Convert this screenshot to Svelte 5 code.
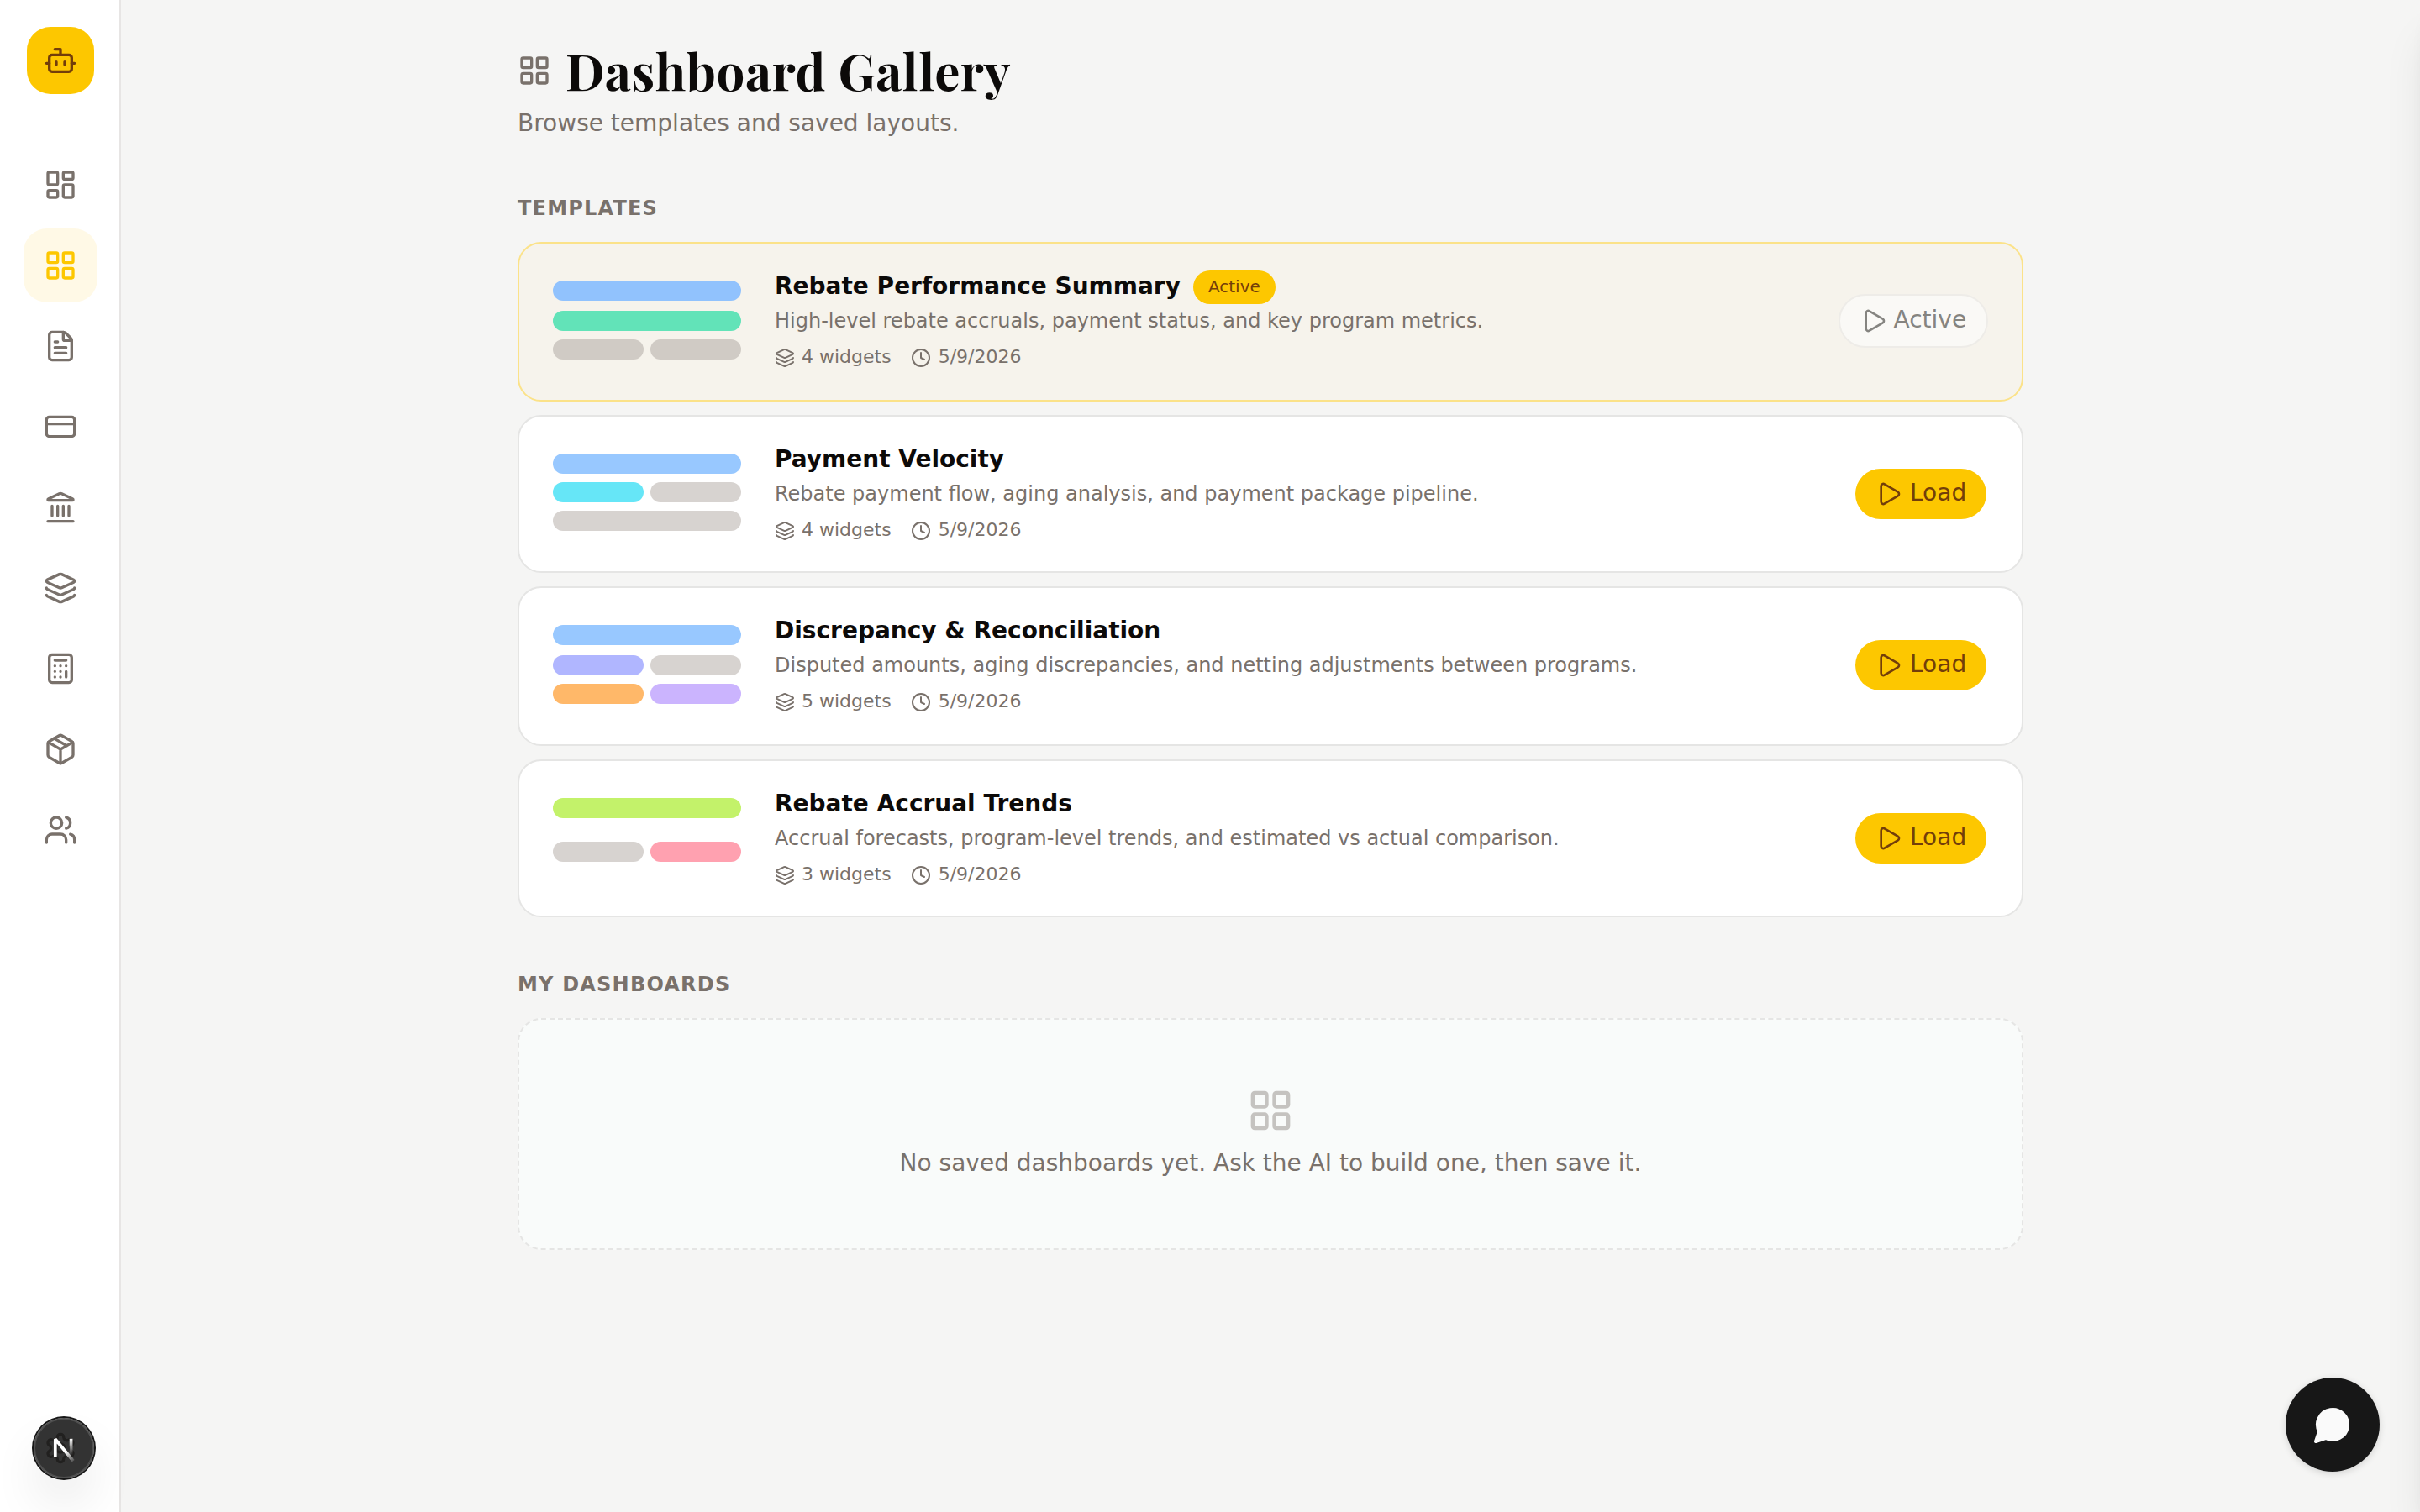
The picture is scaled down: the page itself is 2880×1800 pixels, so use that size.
<script lang="ts">
    type Bar = { color: string; wide?: boolean };

    const nav = [
        { icon: "dashboard" },
        { icon: "grid", active: true },
        { icon: "file" },
        { icon: "card" },
        { icon: "bank" },
        { icon: "layers" },
        { icon: "calculator" },
        { icon: "package" },
        { icon: "users" },
    ];

    const templates: {
        name: string; text: string; widgets: number; date: string;
        height: number; rows: string; bars: Bar[]; active?: boolean;
    }[] = [
        {
            name: "Rebate Performance Summary",
            text: "High-level rebate accruals, payment status, and key program metrics.",
            widgets: 4,
            date: "5/9/2026",
            height: 190,
            rows: "28px 26px 26px",
            bars: [
                { color: "#91c2fd", wide: true },
                { color: "#62e3b8", wide: true },
                { color: "#d0cbc5" },
                { color: "#d0cbc5" },
            ],
            active: true,
        },
        {
            name: "Payment Velocity",
            text: "Rebate payment flow, aging analysis, and payment package pipeline.",
            widgets: 4,
            date: "5/9/2026",
            height: 188,
            rows: "26px 26px 28px",
            bars: [
                { color: "#98c8ff", wide: true },
                { color: "#66e6f7" },
                { color: "#d7d3d0" },
                { color: "#d7d3d0", wide: true },
            ],
        },
        {
            name: "Discrepancy & Reconciliation",
            text: "Disputed amounts, aging discrepancies, and netting adjustments between programs.",
            widgets: 5,
            date: "5/9/2026",
            height: 190,
            rows: "28px 26px 26px",
            bars: [
                { color: "#98c8ff", wide: true },
                { color: "#b0b6ff" },
                { color: "#d7d3d0" },
                { color: "#ffb869" },
                { color: "#cbb4fe" },
            ],
        },
        {
            name: "Rebate Accrual Trends",
            text: "Accrual forecasts, program-level trends, and estimated vs actual comparison.",
            widgets: 3,
            date: "5/9/2026",
            height: 188,
            rows: "44px 44px",
            bars: [
                { color: "#c3f26a", wide: true },
                { color: "#d7d3d0" },
                { color: "#ffa1b0" },
            ],
        },
    ];
</script>

{#snippet icon(name: string, size: number)}
    <svg class="icon" width={size} height={size} viewBox="0 0 24 24">
        {#if name === "bot"}
            <path d="M12 8V4H8" />
            <rect width="16" height="12" x="4" y="8" rx="2" />
            <path d="M2 14h2M20 14h2M15 13v2M9 13v2" />
        {:else if name === "dashboard"}
            <rect width="7" height="9" x="3" y="3" rx="1" />
            <rect width="7" height="5" x="14" y="3" rx="1" />
            <rect width="7" height="9" x="14" y="12" rx="1" />
            <rect width="7" height="5" x="3" y="16" rx="1" />
        {:else if name === "grid"}
            <rect width="7" height="7" x="3" y="3" rx="1" />
            <rect width="7" height="7" x="14" y="3" rx="1" />
            <rect width="7" height="7" x="14" y="14" rx="1" />
            <rect width="7" height="7" x="3" y="14" rx="1" />
        {:else if name === "file"}
            <path d="M6 22a2 2 0 0 1-2-2V4a2 2 0 0 1 2-2h8a2.4 2.4 0 0 1 1.704.706l3.588 3.588A2.4 2.4 0 0 1 20 8v12a2 2 0 0 1-2 2z" />
            <path d="M14 2v5a1 1 0 0 0 1 1h5M10 9H8M16 13H8M16 17H8" />
        {:else if name === "card"}
            <rect width="20" height="14" x="2" y="5" rx="2" />
            <path d="M2 10h20" />
        {:else if name === "bank"}
            <path d="M10 18v-7M14 18v-7M18 18v-7M6 18v-7M3 22h18" />
            <path d="M11.12 2.198a2 2 0 0 1 1.76.006l7.866 3.847c.476.233.31.949-.22.949H3.474c-.53 0-.695-.716-.22-.949z" />
        {:else if name === "layers"}
            <path d="M12.83 2.18a2 2 0 0 0-1.66 0L2.6 6.08a1 1 0 0 0 0 1.83l8.58 3.91a2 2 0 0 0 1.66 0l8.58-3.9a1 1 0 0 0 0-1.83z" />
            <path d="M2 12a1 1 0 0 0 .58.91l8.6 3.91a2 2 0 0 0 1.65 0l8.58-3.9A1 1 0 0 0 22 12" />
            <path d="M2 17a1 1 0 0 0 .58.91l8.6 3.91a2 2 0 0 0 1.65 0l8.58-3.9A1 1 0 0 0 22 17" />
        {:else if name === "calculator"}
            <rect width="16" height="20" x="4" y="2" rx="2" />
            <path d="M8 6h8M16 14v4M16 10h.01M12 10h.01M8 10h.01M12 14h.01M8 14h.01M12 18h.01M8 18h.01" />
        {:else if name === "package"}
            <path d="M11 21.73a2 2 0 0 0 2 0l7-4A2 2 0 0 0 21 16V8a2 2 0 0 0-1-1.73l-7-4a2 2 0 0 0-2 0l-7 4A2 2 0 0 0 3 8v8a2 2 0 0 0 1 1.73z" />
            <path d="M12 22V12M3.29 7 12 12l8.71-5M7.5 4.27l9 5.15" />
        {:else if name === "users"}
            <path d="M16 21v-2a4 4 0 0 0-4-4H6a4 4 0 0 0-4 4v2" />
            <path d="M16 3.128a4 4 0 0 1 0 7.744M22 21v-2a4 4 0 0 0-3-3.87" />
            <circle cx="9" cy="7" r="4" />
        {:else if name === "settings"}
            <path d="M12.22 2h-.44a2 2 0 0 0-2 2v.18a2 2 0 0 1-1 1.73l-.43.25a2 2 0 0 1-2 0l-.15-.08a2 2 0 0 0-2.73.73l-.22.38a2 2 0 0 0 .73 2.73l.15.1a2 2 0 0 1 1 1.72v.51a2 2 0 0 1-1 1.74l-.15.09a2 2 0 0 0-.73 2.73l.22.38a2 2 0 0 0 2.73.73l.15-.08a2 2 0 0 1 2 0l.43.25a2 2 0 0 1 1 1.73V20a2 2 0 0 0 2 2h.44a2 2 0 0 0 2-2v-.18a2 2 0 0 1 1-1.73l.43-.25a2 2 0 0 1 2 0l.15.08a2 2 0 0 0 2.73-.73l.22-.39a2 2 0 0 0-.73-2.73l-.15-.08a2 2 0 0 1-1-1.74v-.5a2 2 0 0 1 1-1.74l.15-.09a2 2 0 0 0 .73-2.73l-.22-.38a2 2 0 0 0-2.73-.73l-.15.08a2 2 0 0 1-2 0l-.43-.25a2 2 0 0 1-1-1.73V4a2 2 0 0 0-2-2z" />
            <circle cx="12" cy="12" r="3" />
        {:else if name === "clock"}
            <circle cx="12" cy="12" r="10" />
            <path d="M12 6v6l4 2" />
        {:else if name === "play"}
            <path d="M5 5a2 2 0 0 1 3.008-1.728l11.997 6.998a2 2 0 0 1 .003 3.458l-12 7A2 2 0 0 1 5 19z" />
        {:else if name === "chat"}
            <path fill="currentColor" d="M7.9 20A9 9 0 1 0 4 16.1L2 22Z" />
        {/if}
    </svg>
{/snippet}

<div class="app">
    <aside class="sidebar">
        <div class="logo">{@render icon("bot", 40)}</div>
        <nav>
            {#each nav as item}
                <button class="nav-item" class:active={item.active} aria-label={item.icon}>
                    {@render icon(item.icon, 40)}
                </button>
            {/each}
        </nav>
        <button class="nav-item settings" aria-label="settings">{@render icon("settings", 40)}</button>
    </aside>

    <main>
        <header>
            <span class="title-icon">{@render icon("grid", 40)}</span>
            <h1>Dashboard Gallery</h1>
        </header>
        <p class="subtitle">Browse templates and saved layouts.</p>

        <h2>Templates</h2>
        <div class="list">
            {#each templates as t}
                <article class="card" class:current={t.active} style:height="{t.height}px">
                    <div class="preview" style:grid-template-rows={t.rows}>
                        {#each t.bars as bar}
                            <span class="bar" class:wide={bar.wide} style:background={bar.color}></span>
                        {/each}
                    </div>
                    <div class="info">
                        <div class="name">
                            <h3>{t.name}</h3>
                            {#if t.active}<span class="badge">Active</span>{/if}
                        </div>
                        <p class="text">{t.text}</p>
                        <div class="meta">
                            <span class="meta-item">{@render icon("layers", 24)}<span>{t.widgets} widgets</span></span>
                            <span class="meta-item date">{@render icon("clock", 24)}<span>{t.date}</span></span>
                        </div>
                    </div>
                    <button class="action" disabled={t.active}>
                        {@render icon("play", 32)}<span>{t.active ? "Active" : "Load"}</span>
                    </button>
                </article>
            {/each}
        </div>

        <h2 class="mine">My Dashboards</h2>
        <div class="empty">
            <span class="empty-icon">{@render icon("grid", 56)}</span>
            <p>No saved dashboards yet. Ask the AI to build one, then save it.</p>
        </div>
    </main>

    <!-- closed drawer, only its shadow reaches the page -->
    <div class="drawer"></div>

    <div class="dev-badge">
        <svg width="72" height="72" viewBox="0 0 36 36">
            <defs>
                <linearGradient id="n-diag" x1="16.5" y1="18" x2="24" y2="27" gradientUnits="userSpaceOnUse">
                    <stop offset="0.3" stop-color="#fff" />
                    <stop offset="1" stop-color="#fff" stop-opacity="0" />
                </linearGradient>
                <linearGradient id="n-stem" x1="0" y1="12.4" x2="0" y2="22" gradientUnits="userSpaceOnUse">
                    <stop stop-color="#fff" />
                    <stop offset="1" stop-color="#fff" stop-opacity="0" />
                </linearGradient>
            </defs>
            <path d="M23.6 25.6 12.9 12.6V23.4" fill="none" stroke="url(#n-diag)" stroke-width="1.86" stroke-linejoin="bevel" />
            <path d="M22.3 12.4V23.4" fill="none" stroke="url(#n-stem)" stroke-width="1.86" />
        </svg>
    </div>

    <button class="chat" aria-label="chat">{@render icon("chat", 48)}</button>
</div>

<style>
    :global(body) {
        margin: 0;
        background: #f5f5f4;
    }

    .app {
        position: relative;
        display: flex;
        width: 2880px;
        height: 1800px;
        overflow: hidden;
        background: #f5f5f4;
        color: #0c0a09;
        font-family: "DejaVu Sans", sans-serif;
    }

    h1, h2, h3, p {
        margin: 0;
    }

    button {
        font: inherit;
        border: none;
        padding: 0;
    }

    .icon {
        display: block;
        flex-shrink: 0;
        fill: none;
        stroke: currentColor;
        stroke-width: 2;
        stroke-linecap: round;
        stroke-linejoin: round;
    }

    .sidebar {
        box-sizing: border-box;
        width: 144px;
        flex-shrink: 0;
        display: flex;
        flex-direction: column;
        padding: 32px 26px 32px 28px;
        background: #fff;
        border-right: 2px solid #e7e5e4;
    }

    .logo {
        display: grid;
        place-items: center;
        width: 80px;
        height: 80px;
        margin: 0 4px 64px;
        border-radius: 28px;
        background: #fdc700;
        color: #733e0a;
    }

    nav {
        display: flex;
        flex-direction: column;
        gap: 8px;
    }

    .nav-item {
        display: grid;
        place-items: center;
        width: 88px;
        height: 88px;
        border-radius: 28px;
        background: none;
        color: #79716b;
    }

    .nav-item.active {
        background: #fff9e6;
        color: #fdc700;
    }

    .nav-item.settings {
        margin-top: auto;
        color: #a6a09b;
    }

    main {
        width: 1792px;
        margin: 0 auto;
        padding-top: 48px;
    }

    header {
        display: flex;
        align-items: center;
        gap: 17px;
        height: 72px;
    }

    .title-icon {
        color: #79716b;
    }

    h1 {
        margin-bottom: 2px;
        font-family: "Playfair Display", "Liberation Serif", serif;
        font-size: 60px;
        line-height: 72px;
        font-weight: 700;
        letter-spacing: 0.01em;
    }

    .subtitle {
        margin-top: 10px;
        font-size: 28px;
        line-height: 33px;
        color: #79716b;
    }

    h2 {
        margin: 71px 0 26px;
        font-size: 24px;
        line-height: 28px;
        font-weight: 700;
        letter-spacing: 1.2px;
        text-transform: uppercase;
        color: #79716b;
    }

    h2.mine {
        margin-top: 66px;
    }

    .list {
        display: flex;
        flex-direction: column;
        gap: 16px;
    }

    .card {
        box-sizing: border-box;
        display: flex;
        align-items: flex-start;
        gap: 40px;
        padding: 32px 40px;
        border: 2px solid #e5e5e4;
        border-radius: 28px;
        background: #fff;
    }

    .card.current {
        background: #f6f3ec;
        border-color: #fbe289;
    }

    .preview {
        display: grid;
        grid-template-columns: 1fr 1fr;
        gap: 8px;
        width: 224px;
        height: 96px;
        margin-top: 12px;
    }

    .bar {
        height: 24px;
        border-radius: 12px;
    }

    .bar.wide {
        grid-column: span 2;
    }

    .info {
        flex: 1;
    }

    .name {
        display: flex;
        align-items: center;
        gap: 15px;
        height: 40px;
    }

    h3 {
        font-size: 28px;
        line-height: 33px;
        font-weight: 700;
        margin-bottom: 3px;
    }

    .badge {
        height: 40px;
        padding: 0 18px;
        border-radius: 20px;
        background: #fdc700;
        color: #733e0a;
        font-size: 20px;
        line-height: 38px;
    }

    .text {
        margin-top: 6px;
        font-size: 24px;
        line-height: 28px;
        color: #79716b;
    }

    .meta {
        display: flex;
        gap: 23px;
        margin-top: 16px;
        font-size: 22px;
        line-height: 25px;
        color: #79716b;
    }

    .meta-item {
        display: flex;
        gap: 8px;
    }

    .meta-item.date {
        gap: 9px;
    }

    .meta-item .icon {
        margin-top: 2px;
    }

    .action {
        box-sizing: border-box;
        display: flex;
        align-items: center;
        gap: 9px;
        width: 160px;
        height: 64px;
        margin-top: 28px;
        padding: 0 0 0 24px;
        border: 2px solid transparent;
        border-radius: 32px;
        background: #fdc700;
        background-clip: padding-box;
        color: #733e0a;
        font-size: 28px;
        line-height: 33px;
        white-space: nowrap;
    }

    .action span {
        margin-bottom: 3px;
    }

    .action:disabled {
        gap: 7.5px;
        width: 178px;
        background: #faf9f6;
        border-color: #eeece8;
        color: #858480;
    }

    .empty {
        box-sizing: border-box;
        display: flex;
        flex-direction: column;
        align-items: center;
        height: 276px;
        padding-top: 80px;
        border: 2px dashed #e5e5e4;
        border-radius: 28px;
        background: #f9fbfa;
        color: #79716b;
        font-size: 28px;
        line-height: 33px;
    }

    .empty-icon {
        opacity: 0.4;
        margin-bottom: 18px;
    }

    .drawer {
        position: absolute;
        top: 0;
        left: 2880px;
        width: 800px;
        height: 1800px;
        box-shadow:
            0 40px 50px -10px rgba(0, 0, 0, 0.1),
            0 16px 20px -12px rgba(0, 0, 0, 0.1);
    }

    .dev-badge {
        position: absolute;
        left: 40px;
        top: 1688px;
        width: 72px;
        height: 72px;
        border-radius: 50%;
        background: rgba(0, 0, 0, 0.8);
        box-shadow:
            0 0 0 2px #171717,
            inset 0 0 0 2px rgba(255, 255, 255, 0.14),
            0 32px 64px -16px rgba(0, 0, 0, 0.24);
    }

    .dev-badge svg {
        display: block;
    }

    .chat {
        position: absolute;
        left: 2720px;
        top: 1640px;
        display: grid;
        place-items: center;
        width: 112px;
        height: 112px;
        border-radius: 50%;
        background: #171717;
        color: #fafafa;
        box-shadow: 0 2px 8px rgba(0, 0, 0, 0.14);
    }
</style>
